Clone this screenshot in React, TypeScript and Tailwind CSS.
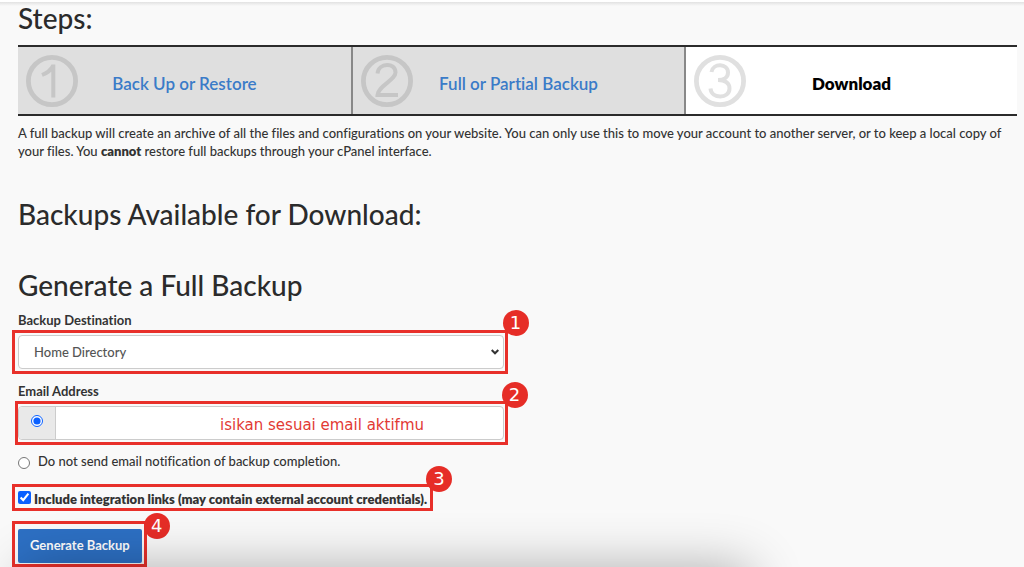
import { ReactNode } from "react";

const steps = [
  { id: 1, name: "Back Up or Restore", href: "#restore", current: false },
  { id: 2, name: "Full or Partial Backup", href: "#partial", current: false },
  { id: 3, name: "Download", href: "#download", current: true },
];

function classNames(...classes: (string | false)[]) {
  return classes.filter(Boolean).join(" ");
}

// Red frame with a numbered marker on its top right corner
function Callout({
  number,
  frame,
  marker,
  children,
}: {
  number: number;
  frame: string;
  marker: string;
  children: ReactNode;
}) {
  return (
    <div className="relative">
      {children}
      <div
        className={classNames(
          "pointer-events-none absolute border-3 border-[#e8302a]",
          frame,
        )}
      >
        <span
          className={classNames(
            "absolute flex size-[26px] items-center justify-center rounded-full bg-[#e62d27] font-['DejaVu_Sans',sans-serif] text-[18px] leading-none text-white",
            marker,
          )}
        >
          {number}
        </span>
      </div>
    </div>
  );
}

function StepNumber({ id, current }: { id: number; current: boolean }) {
  return (
    <svg
      viewBox="0 0 52 52"
      className={classNames(
        "ml-2 size-[52px] flex-none",
        current ? "text-[#e0e0e0]" : "text-[#c6c6c6]",
      )}
      fill="none"
      stroke="currentColor"
      strokeWidth={4}
      aria-hidden="true"
    >
      <circle cx={26} cy={26} r={23.6} strokeWidth={4.8} />
      {id === 1 && <path d="M16 20C21 18 25 15 27 11M27.300 9.500V42.500" />}
      {id === 2 && (
        <path d="M16.500 18.500C17.500 7.500 34.500 7 34.500 17.500C34.500 25 17 31 16.500 40H37" />
      )}
      {id === 3 && (
        <path d="M17.500 17C19 7.500 34 8.500 34 17.500C34 22.500 30 25 24 25C31 25 35.500 28 35.500 33.500C35.500 44 17.500 44.500 16.500 33.500" />
      )}
    </svg>
  );
}

export default function App() {
  return (
    <div className="relative min-h-screen overflow-hidden bg-[#f9f9f9] font-[Lato,sans-serif] text-[13px] leading-[18px] font-medium text-[#333] [font-variant-ligatures:none]">
      <div className="h-0.5 bg-white" />
      <div className="h-1 bg-linear-to-b from-[#e2e2e2] to-[#f9f9f9]" />

      <main className="pr-[7px] pl-[18px]">
        <h2 className="text-[28px] leading-6 text-[#2b2b2b]">Steps:</h2>

        <ol className="mt-[15px] grid grid-cols-3 border-y-2 border-[#2b2b2b]">
          {steps.map((step) => (
            <li
              key={step.id}
              className={classNames(
                "flex h-[67px] items-center border-[#888] not-first:border-l-2",
                step.current ? "bg-white" : "bg-[#dfdfdf]",
              )}
            >
              <StepNumber id={step.id} current={step.current} />
              <div className="flex-1 pt-1.5 pr-[60px] text-center text-[17px] leading-6">
                {step.current ? (
                  <span className="font-extrabold text-black">{step.name}</span>
                ) : (
                  <a href={step.href} className="font-semibold text-[#3a7bc8]">
                    {step.name}
                  </a>
                )}
              </div>
            </li>
          ))}
        </ol>

        <p className="mt-2">
          A full backup will create an archive of all the files and
          configurations on your website. You can only use this to move your
          account to another server, or to keep a local copy of your files. You{" "}
          <strong className="font-extrabold">cannot</strong> restore full
          backups through your cPanel interface.
        </p>

        <h2 className="mt-[38px] text-[28px] leading-8 text-[#2b2b2b]">
          Backups Available for Download:
        </h2>
        <h2 className="mt-[39px] text-[28px] leading-8 text-[#2b2b2b]">
          Generate a Full Backup
        </h2>

        <form className="mt-2.5" onSubmit={(e) => e.preventDefault()}>
          <div className="w-1/2 pr-[14px]">
            <label htmlFor="destination" className="block font-bold">
              Backup Destination
            </label>
            <div className="mt-1.5">
              <Callout
                number={1}
                frame="-inset-y-[5px] -right-1 -left-1.5"
                marker="-top-[23px] -right-6"
              >
                <select
                  id="destination"
                  className="block h-[34px] w-full appearance-none rounded border border-[#ccc] bg-white px-[15px] text-[#555]"
                >
                  <option>Home Directory</option>
                </select>
                <svg
                  viewBox="0 0 8 6"
                  className="pointer-events-none absolute top-3.5 right-[5px] h-1.5 w-2"
                  fill="none"
                  stroke="#333"
                  strokeWidth={2}
                  aria-hidden="true"
                >
                  <path d="M0.700 1L4 4.300L7.300 1" />
                </svg>
              </Callout>
            </div>

            <label htmlFor="email" className="mt-[13px] block font-bold">
              Email Address
            </label>
            <div className="mt-1.5">
              <Callout
                number={2}
                frame="-inset-y-[5px] -right-1 -left-[3px]"
                marker="-top-[22px] -right-[23px]"
              >
                <div className="flex h-[34px] rounded border border-[#ccc] bg-white">
                  <div className="flex w-[37px] flex-none justify-center rounded-l border-r border-[#ccc] bg-[#e9e9e9] pt-2">
                    <input
                      type="radio"
                      name="notify"
                      defaultChecked
                      aria-label="Send email notification"
                      className="size-3 accent-[#0a60ff]"
                    />
                  </div>
                  <input
                    id="email"
                    type="text"
                    defaultValue="isikan sesuai email aktifmu"
                    className="min-w-0 flex-1 rounded-r pt-1 pl-[164px] font-['DejaVu_Sans',sans-serif] text-[15px] text-[#e23a34] outline-none"
                  />
                </div>
              </Callout>
            </div>
          </div>

          <div className="mt-3 flex items-center">
            <input
              id="no-email"
              type="radio"
              name="notify"
              className="mt-1 size-3"
            />
            <label htmlFor="no-email" className="ml-2">
              Do not send email notification of backup completion.
            </label>
          </div>

          <div className="mt-5 w-fit">
            <Callout
              number={3}
              frame="-top-1.5 -right-1.5 -bottom-[3px] -left-1.5"
              marker="-top-[21px] -right-[22px]"
            >
              <div className="flex items-center">
                <input
                  id="links"
                  type="checkbox"
                  defaultChecked
                  className="mb-1 size-[13px] accent-[#0a60ff]"
                />
                <label htmlFor="links" className="ml-[3px] font-extrabold">
                  Include integration links (may contain external account
                  credentials).
                </label>
              </div>
            </Callout>
          </div>

          <div className="mt-[21px] w-fit">
            <Callout
              number={4}
              frame="-top-2 -right-[5px] -bottom-1 -left-1.5"
              marker="-top-[11px] -right-[26px]"
            >
              <button
                type="submit"
                className="block h-[34px] rounded-xs bg-[#2d70c4] px-3 pb-0.5 font-bold text-white"
              >
                Generate Backup
              </button>
            </Callout>
          </div>
        </form>
      </main>

      {/* shadow cast by the panel below the page */}
      <div className="pointer-events-none absolute -bottom-20 left-6 h-20 w-[71%] rounded-xl shadow-[0_0_52px_rgba(0,0,0,0.3)]" />
    </div>
  );
}
